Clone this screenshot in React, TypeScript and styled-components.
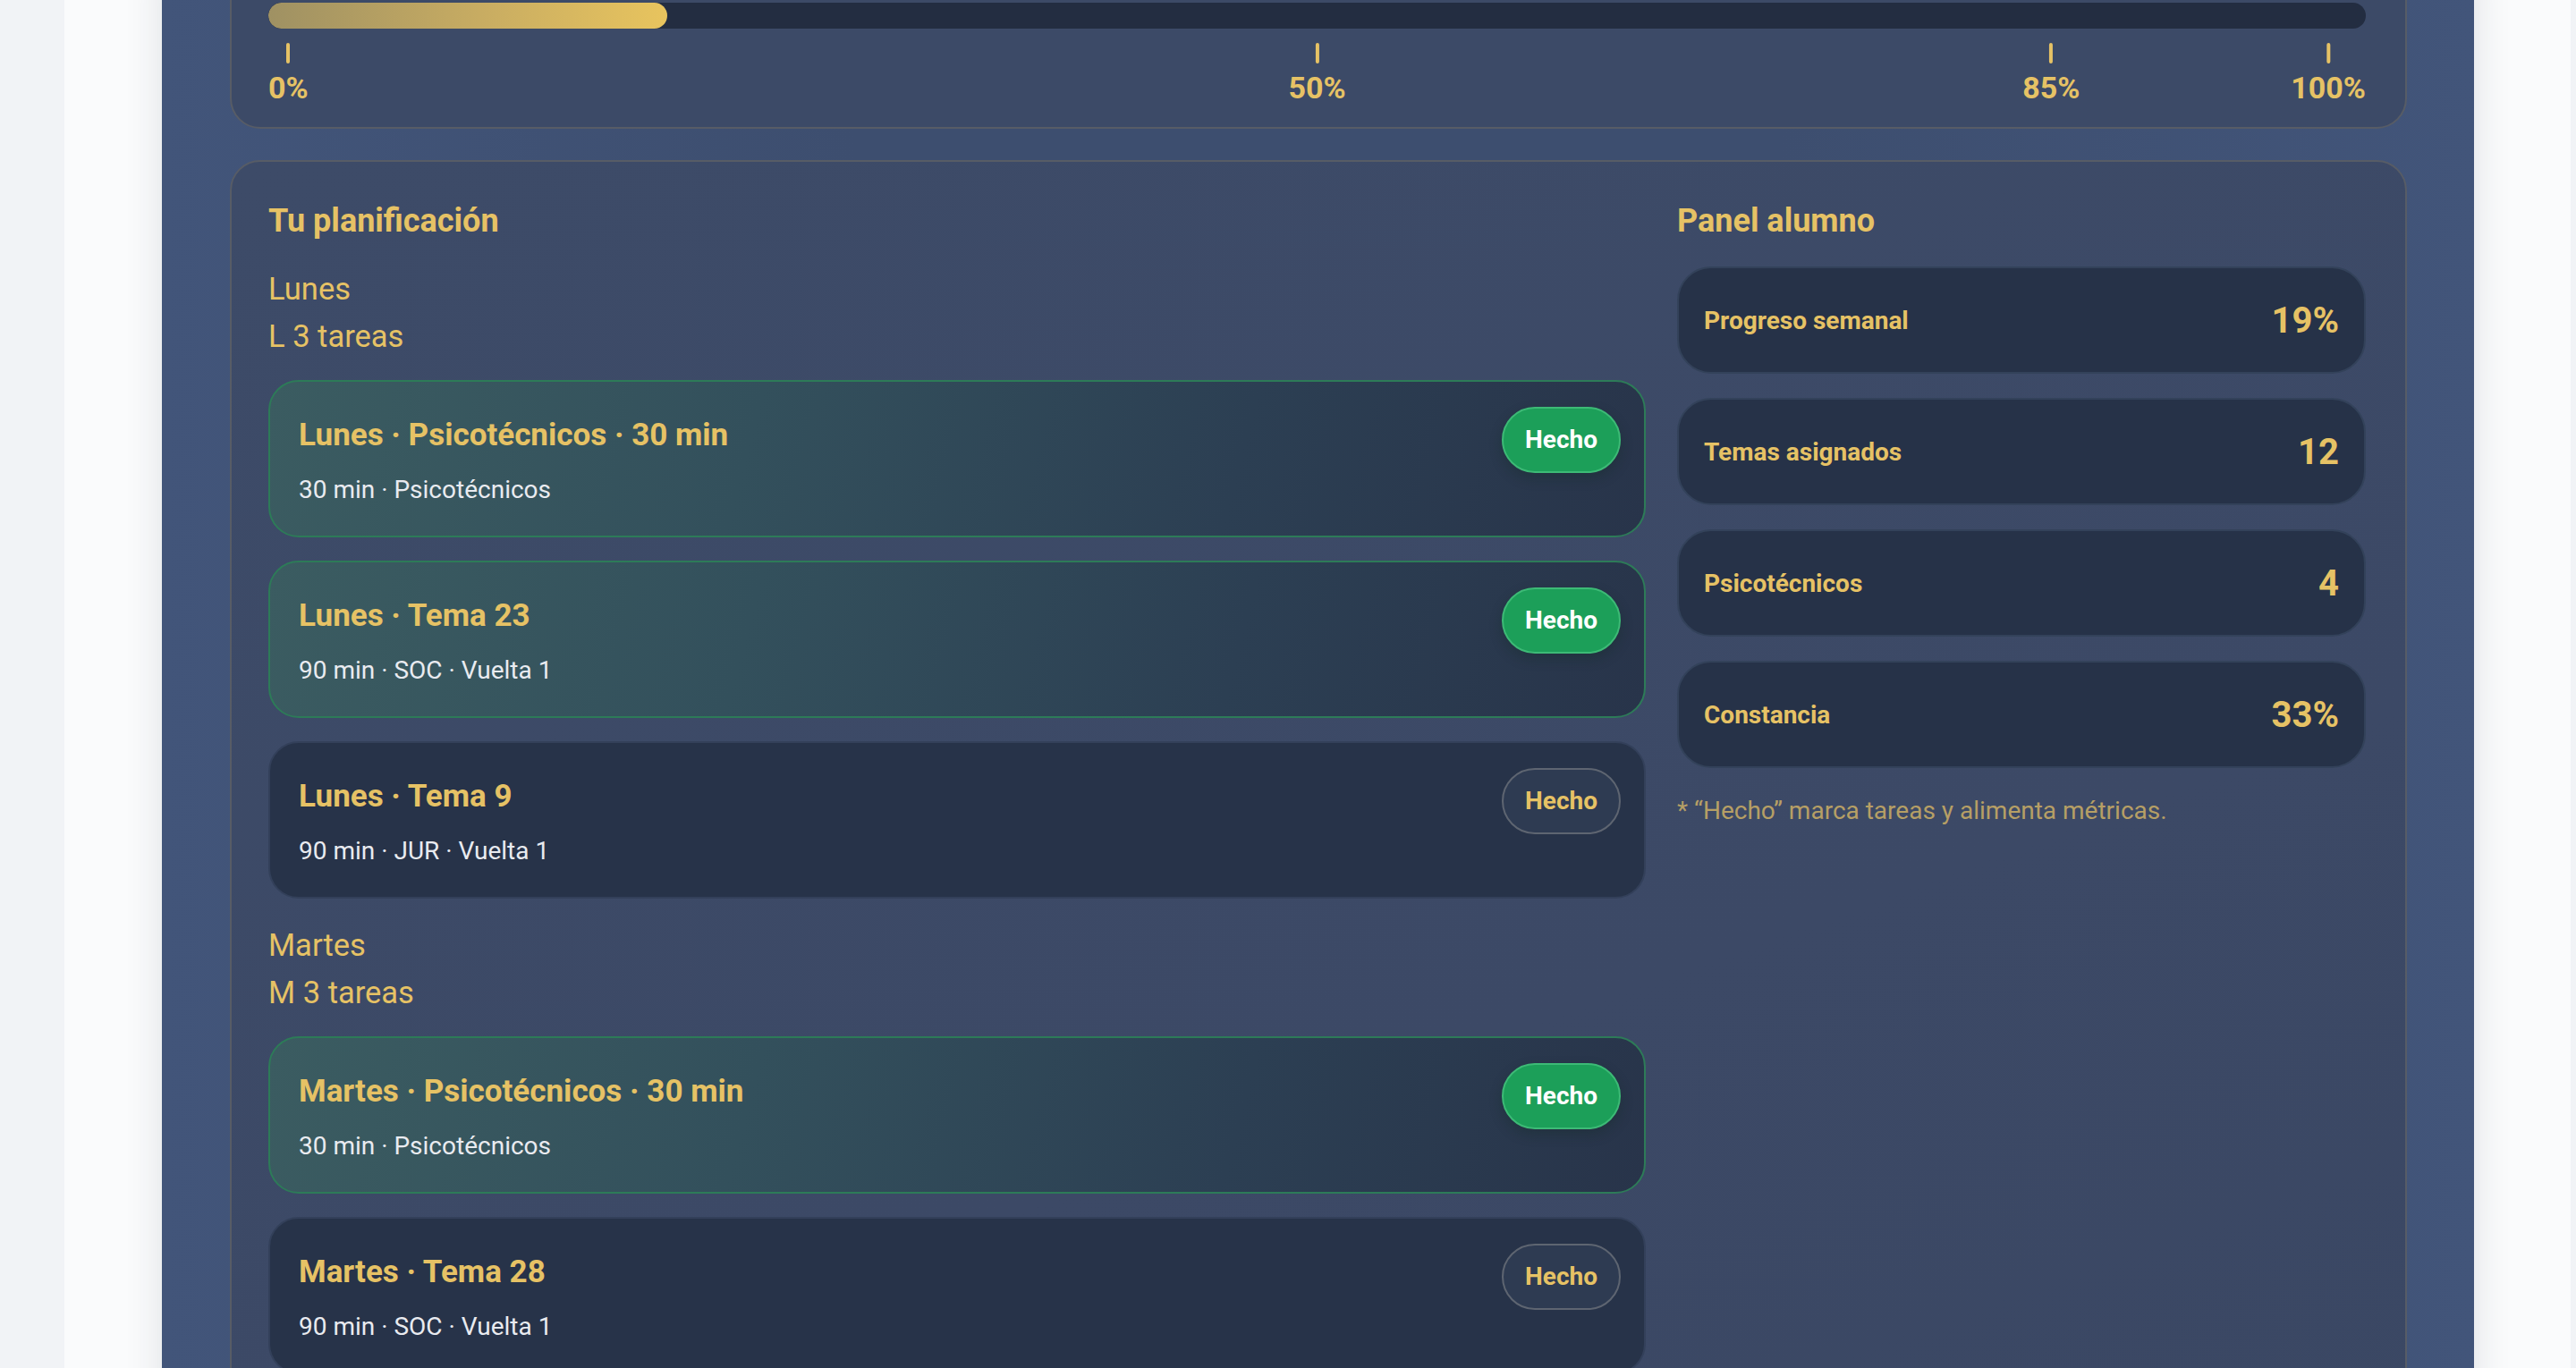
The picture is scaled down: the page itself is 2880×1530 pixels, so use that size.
import styled, { createGlobalStyle } from "styled-components";

const GlobalStyle = createGlobalStyle`
  html, body {
    margin: 0;
    padding: 0;
    background: #f1f3f6;
    overflow: hidden;
  }
  body {
    font-family: Roboto, "Noto Sans", "Liberation Sans", sans-serif;
  }
  * {
    box-sizing: border-box;
  }
`;

const GOLD = "#e6c265";

const Page = styled.div`
  margin-left: 72px;
  width: 2802px;
  min-height: 1530px;
  background: #fafbfc;
  padding: 0 108px 0 109px;
`;

const Shell = styled.main`
  min-height: 1530px;
  background: linear-gradient(90deg, #42557a 0%, #3d4e6f 30%, #3d4e6f 70%, #42557a 100%);
  box-shadow: 0 0 40px rgba(30, 40, 60, 0.12);
  padding: 0 75px 0 76px;
`;

const Card = styled.section`
  background: #3c4a67;
  border: 2px solid #575c66;
  border-radius: 34px;
`;

const ProgressCard = styled(Card)`
  margin-top: -39px;
  padding: 40px 44px 25px 41px;
`;

const Track = styled.div`
  height: 29px;
  border-radius: 15px;
  background: #232d41;
  overflow: hidden;
`;

const Fill = styled.div`
  height: 100%;
  border-radius: 15px;
  background: linear-gradient(90deg, #9f9163 0%, #c9ad62 55%, #e8c45e 100%);
`;

const Scale = styled.div`
  position: relative;
  height: 69px;
  margin-top: 16px;
`;

//marcadores de la escala, se colocan por porcentaje
const Marker = styled.div<{ $align: "start" | "center" | "end" }>`
  position: absolute;
  top: 0;
  display: flex;
  flex-direction: column;
  align-items: center;
  gap: 7px;
  transform: translateX(
    ${(p) => (p.$align === "start" ? "0" : p.$align === "end" ? "-100%" : "-50%")}
  );
`;

const Tick = styled.span`
  width: 4px;
  height: 23px;
  border-radius: 2px;
  background: ${GOLD};
`;

const MarkerLabel = styled.span`
  font-size: 34px;
  line-height: 40px;
  font-weight: 700;
  color: ${GOLD};
`;

const PlanCard = styled(Card)`
  margin-top: 35px;
  padding: 45px 44px 44px 41px;
  display: grid;
  grid-template-columns: 2fr 1fr;
  column-gap: 35px;
  align-items: start;
  background: linear-gradient(160deg, #3d4b68 0%, #3c4966 60%, #3a4763 100%);
`;

const Column = styled.div`
  display: flex;
  flex-direction: column;
  gap: 30px;
`;

const SectionTitle = styled.h2`
  margin: 0 0 3px;
  font-size: 36px;
  line-height: 42px;
  font-weight: 700;
  color: ${GOLD};
`;

const DayGroup = styled.div`
  display: flex;
  flex-direction: column;
`;

const DayName = styled.div`
  font-size: 34.5px;
  line-height: 44px;
  color: ${GOLD};
`;

const DayCount = styled(DayName)`
  margin-top: 9px;
`;

const TaskList = styled.div`
  display: flex;
  flex-direction: column;
  gap: 26px;
  margin-top: 27px;
`;

const Task = styled.div<{ $done: boolean }>`
  display: flex;
  align-items: flex-start;
  justify-content: space-between;
  height: 176px;
  padding: 30px 26px 35px 32px;
  border-radius: 34px;
  border: 2px solid ${(p) => (p.$done ? "#2d7b58" : "#33405a")};
  background: ${(p) =>
    p.$done
      ? "linear-gradient(105deg, #3b5c61 0%, #33505c 35%, #2c3f53 70%, #28344a 100%)"
      : "#273349"};
`;

const TaskText = styled.div`
  display: flex;
  flex-direction: column;
  padding-top: 9px;
`;

const TaskTitle = styled.div`
  font-size: 35px;
  line-height: 42px;
  font-weight: 700;
  color: ${GOLD};
`;

const TaskMeta = styled.div`
  margin-top: 22px;
  font-size: 28px;
  line-height: 36px;
  color: #e9ebf0;
`;

const DoneButton = styled.button<{ $done: boolean }>`
  margin-top: -2px;
  padding: 18px 24px;
  border-radius: 40px;
  font-family: inherit;
  font-size: 28px;
  line-height: 34px;
  font-weight: 700;
  cursor: pointer;
  border: 2px solid ${(p) => (p.$done ? "#3dba76" : "#5e6571")};
  background: ${(p) => (p.$done ? "#1c9f59" : "#2e3b52")};
  color: ${(p) => (p.$done ? "#ffffff" : GOLD)};
  box-shadow: ${(p) => (p.$done ? "0 6px 14px rgba(10, 40, 25, 0.25)" : "none")};
`;

const MetricList = styled.div`
  display: flex;
  flex-direction: column;
  gap: 27px;
  margin-top: -3px;
`;

const Metric = styled.div`
  display: flex;
  align-items: center;
  justify-content: space-between;
  height: 120px;
  padding: 0 28px;
  border-radius: 38px;
  background: #263248;
  border: 2px solid #33425a;
`;

const MetricLabel = styled.span`
  font-size: 28px;
  font-weight: 700;
  color: ${GOLD};
`;

const MetricValue = styled.span`
  font-size: 40px;
  font-weight: 700;
  color: ${GOLD};
`;

const Footnote = styled.p`
  margin: 0;
  font-size: 28px;
  line-height: 36px;
  color: rgba(230, 194, 101, 0.72);
`;

interface ITask {
  id: string;
  title: string;
  meta: string;
  done: boolean;
}

interface IDay {
  name: string;
  short: string;
  tasks: ITask[];
}

const days: IDay[] = [
  {
    name: "Lunes",
    short: "L",
    tasks: [
      { id: "l1", title: "Lunes · Psicotécnicos · 30 min", meta: "30 min · Psicotécnicos", done: true },
      { id: "l2", title: "Lunes · Tema 23", meta: "90 min · SOC · Vuelta 1", done: true },
      { id: "l3", title: "Lunes · Tema 9", meta: "90 min · JUR · Vuelta 1", done: false },
    ],
  },
  {
    name: "Martes",
    short: "M",
    tasks: [
      { id: "m1", title: "Martes · Psicotécnicos · 30 min", meta: "30 min · Psicotécnicos", done: true },
      { id: "m2", title: "Martes · Tema 28", meta: "90 min · SOC · Vuelta 1", done: false },
      { id: "m3", title: "Martes · Tema 14", meta: "90 min · JUR · Vuelta 1", done: false },
    ],
  },
];

const metrics = [
  { label: "Progreso semanal", value: "19%" },
  { label: "Temas asignados", value: "12" },
  { label: "Psicotécnicos", value: "4" },
  { label: "Constancia", value: "33%" },
];

const marks = [0, 50, 85, 100];
const progress = 19;

function App() {
  return (
    <>
      <GlobalStyle />
      <Page>
        <Shell>
          <ProgressCard>
            <Track>
              <Fill style={{ width: `${progress}%` }} />
            </Track>
            <Scale>
              {marks.map((m) => (
                <Marker
                  key={m}
                  style={{ left: `${m}%` }}
                  $align={m === 0 ? "start" : m === 100 ? "end" : "center"}
                >
                  <Tick />
                  <MarkerLabel>{m}%</MarkerLabel>
                </Marker>
              ))}
            </Scale>
          </ProgressCard>

          <PlanCard>
            <Column>
              <SectionTitle>Tu planificación</SectionTitle>
              {days.map((day) => (
                <DayGroup key={day.name}>
                  <DayName>{day.name}</DayName>
                  <DayCount>
                    {day.short} {day.tasks.length} tareas
                  </DayCount>
                  <TaskList>
                    {day.tasks.map((task) => (
                      <Task key={task.id} $done={task.done}>
                        <TaskText>
                          <TaskTitle>{task.title}</TaskTitle>
                          <TaskMeta>{task.meta}</TaskMeta>
                        </TaskText>
                        <DoneButton $done={task.done}>Hecho</DoneButton>
                      </Task>
                    ))}
                  </TaskList>
                </DayGroup>
              ))}
            </Column>

            <Column>
              <SectionTitle>Panel alumno</SectionTitle>
              <MetricList>
                {metrics.map((m) => (
                  <Metric key={m.label}>
                    <MetricLabel>{m.label}</MetricLabel>
                    <MetricValue>{m.value}</MetricValue>
                  </Metric>
                ))}
              </MetricList>
              <Footnote>* “Hecho” marca tareas y alimenta métricas.</Footnote>
            </Column>
          </PlanCard>
        </Shell>
      </Page>
    </>
  );
}

export default App;
